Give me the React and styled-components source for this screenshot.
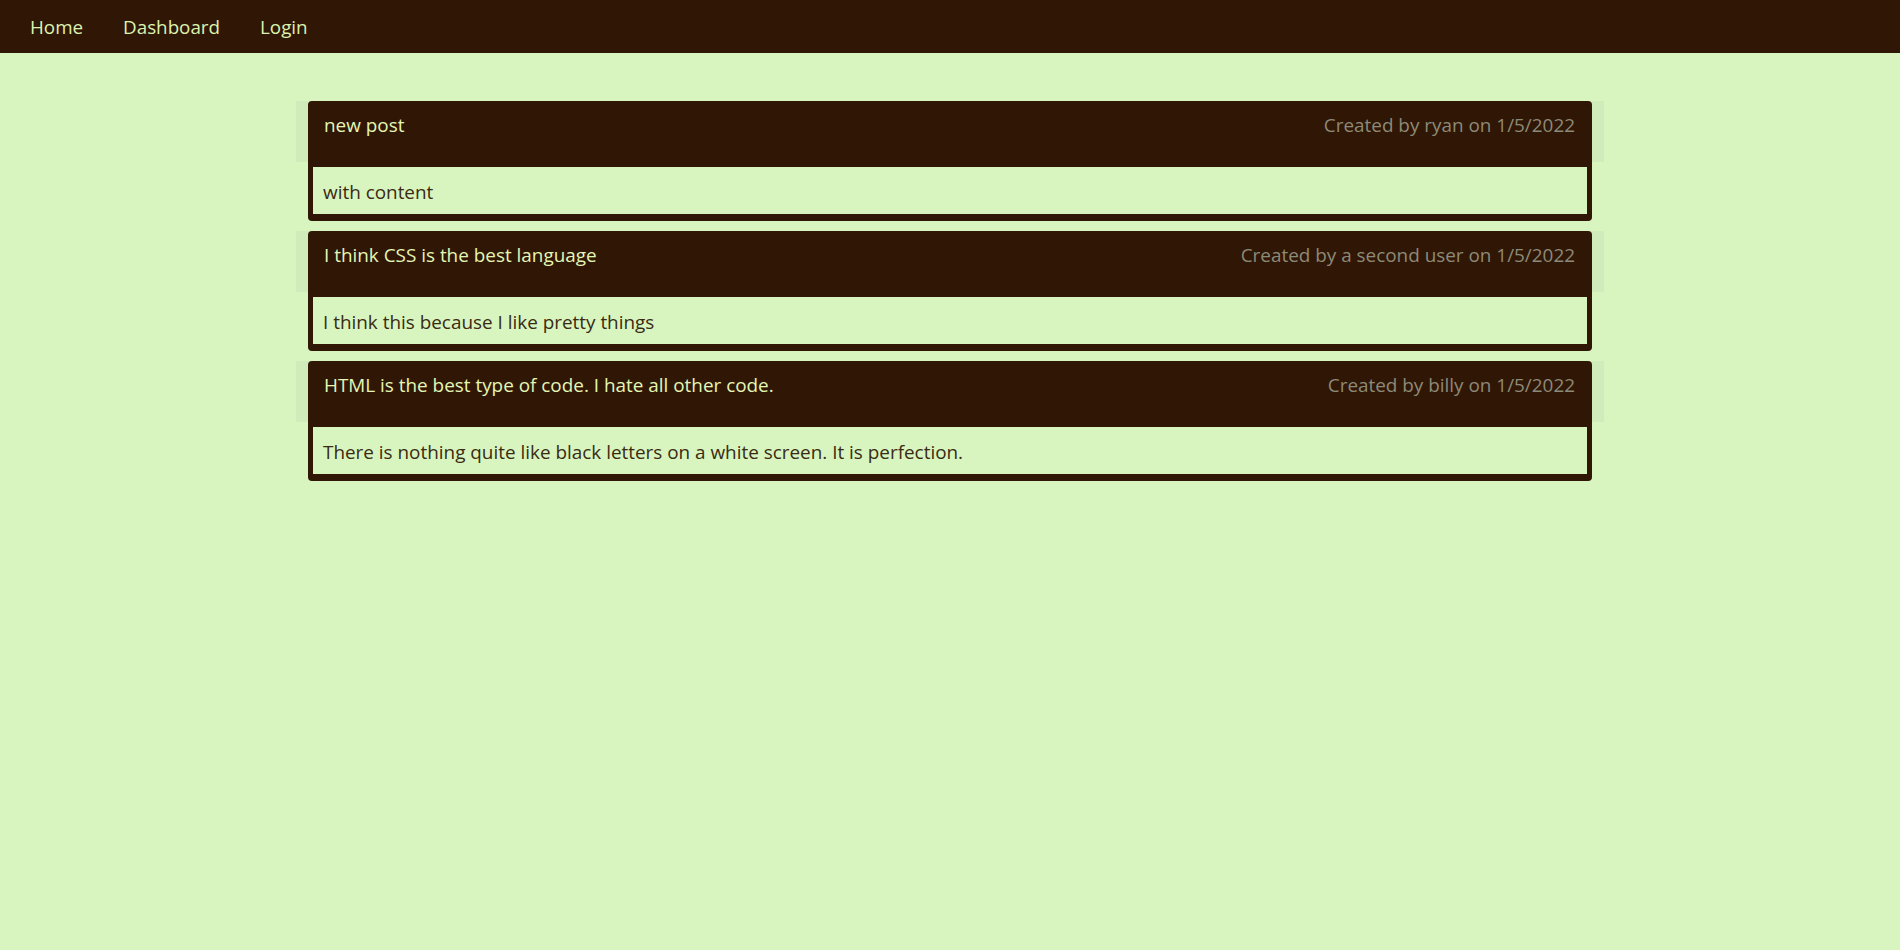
import React from "react";
import styled, { createGlobalStyle } from "styled-components";

const GlobalStyle = createGlobalStyle`
  html, body {
    margin: 0;
    padding: 0;
    background: #d8f5c0;
    font-family: "Open Sans", "Noto Sans", sans-serif;
  }
  * { box-sizing: border-box; }
`;

const NavBar = styled.nav`
  height: 53px;
  background: #301604;
  display: flex;
  align-items: center;
  padding-left: 10px;
`;

const NavLink = styled.a`
  color: #dcf3b0;
  font-size: 18.8px;
  text-decoration: none;
  padding: 2px 20px 0;
  line-height: 51px;
  cursor: pointer;
`;

const Main = styled.main`
  width: 1284px;
  margin: 48px auto 0;
  display: flex;
  flex-direction: column;
  gap: 10px;
`;

const PostWrap = styled.div`
  position: relative;
  &::before {
    content: "";
    position: absolute;
    top: 0;
    left: -12px;
    right: -12px;
    height: 61px;
    background: #d1ecbb;
    z-index: 0;
  }
`;

const Card = styled.article`
  position: relative;
  z-index: 1;
  background: #301604;
  border-radius: 4px;
  padding: 0 5px 7px;
`;

const CardHeader = styled.header`
  height: 66px;
  display: flex;
  justify-content: space-between;
  align-items: flex-start;
  padding: 10px 12px 0 11px;
`;

const Title = styled.h2`
  margin: 0;
  font-size: 18.9px;
  font-weight: 400;
  line-height: 28px;
  color: #e4f6b4;
`;

const Meta = styled.span`
  font-size: 18.9px;
  line-height: 28px;
  color: #8c8a78;
`;

const CardBody = styled.div`
  height: 47px;
  background: #d8f5c0;
  display: flex;
  align-items: center;
  padding: 3px 10px 0;
  font-size: 18.9px;
  color: #3b2a12;
`;

const posts = [
  { title: "new post", author: "ryan", date: "1/5/2022", content: "with content" },
  { title: "I think CSS is the best language", author: "a second user", date: "1/5/2022", content: "I think this because I like pretty things" },
  { title: "HTML is the best type of code. I hate all other code.", author: "billy", date: "1/5/2022", content: "There is nothing quite like black letters on a white screen. It is perfection." },
];

export default function App() {
  return (
    <>
      <GlobalStyle />
      <NavBar>
        <NavLink>Home</NavLink>
        <NavLink>Dashboard</NavLink>
        <NavLink>Login</NavLink>
      </NavBar>
      <Main>
        {posts.map((p, i) => (
          <PostWrap key={i}>
            <Card>
              <CardHeader>
                <Title>{p.title}</Title>
                <Meta>Created by {p.author} on {p.date}</Meta>
              </CardHeader>
              <CardBody>{p.content}</CardBody>
            </Card>
          </PostWrap>
        ))}
      </Main>
    </>
  );
}
